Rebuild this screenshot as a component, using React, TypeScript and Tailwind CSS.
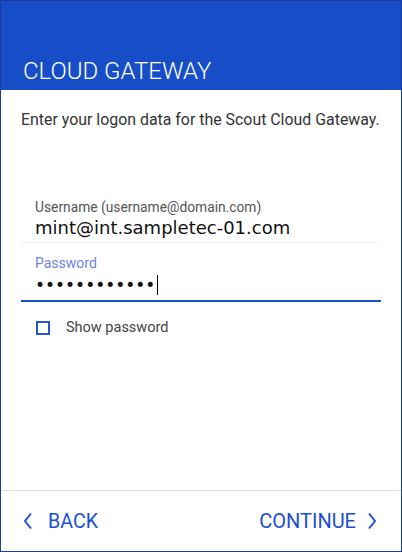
import React from "react";

export default function App() {
  return (
    <div className="w-[402px] h-[552px] border border-[#1a3d9c] bg-white flex flex-col overflow-hidden" style={{ fontFamily: "Roboto, 'Liberation Sans', sans-serif" }}>
      <div className="h-[89px] bg-[#174ec8] flex items-end px-[22px] pb-[4px] shrink-0">
        <div className="text-[24px] font-light leading-[30px] text-white">CLOUD GATEWAY</div>
      </div>
      <div className="flex-1 px-[20px] pt-[18px]">
        <div className="text-[15.9px] leading-[24px] text-[#333] whitespace-nowrap">Enter your logon data for the Scout Cloud Gateway.</div>
        <div className="mt-[65px] border-b border-[#eeeeee] px-[14px] pb-[3px]">
          <div className="text-[13.8px] leading-[20px] text-[#555]">Username (username@domain.com)</div>
          <div className="text-[18px] leading-[22px] text-[#111]" style={{ fontFamily: "'DejaVu Sans', sans-serif" }}>mint@int.sampletec-01.com</div>
        </div>
        <div className="mt-[10px] border-b-2 border-[#1a4fc4] px-[14px] pb-[4px]">
          <div className="text-[14px] leading-[20px] text-[#6f7fe8]">Password</div>
          <div className="flex items-center h-[23px] text-[17px] text-[#111]" style={{ fontFamily: "'DejaVu Sans', sans-serif" }}>
            <span className="leading-[22px]">••••••••••••</span>
            <span className="inline-block w-[1px] h-[20px] bg-black ml-[2px]" />
          </div>
        </div>
        <div className="mt-[16px] flex items-center px-[15px]">
          <div className="w-[14px] h-[14px] border-2 border-[#2a55d0] bg-white" />
          <div className="ml-[16px] text-[14.5px] leading-[20px] text-[#444]">Show password</div>
        </div>
      </div>
      <div className="h-[61px] border-t border-[#dddddd] flex items-center justify-between pl-[22px] pr-[24px] shrink-0 text-[#1c4fd3]">
        <div className="flex items-center">
          <svg width="10" height="18" viewBox="0 0 10 18" className="mr-[15px]">
            <polyline points="8,1.5 2,9 8,16.5" fill="none" stroke="#1c4fd3" strokeWidth="2" />
          </svg>
          <span className="text-[19.6px] leading-[24px] pt-[2px]">BACK</span>
        </div>
        <div className="flex items-center">
          <span className="text-[20px] leading-[24px]">CONTINUE</span>
          <svg width="10" height="18" viewBox="0 0 10 18" className="ml-[11px]">
            <polyline points="2,1.5 8,9 2,16.5" fill="none" stroke="#1c4fd3" strokeWidth="2" />
          </svg>
        </div>
      </div>
    </div>
  );
}
